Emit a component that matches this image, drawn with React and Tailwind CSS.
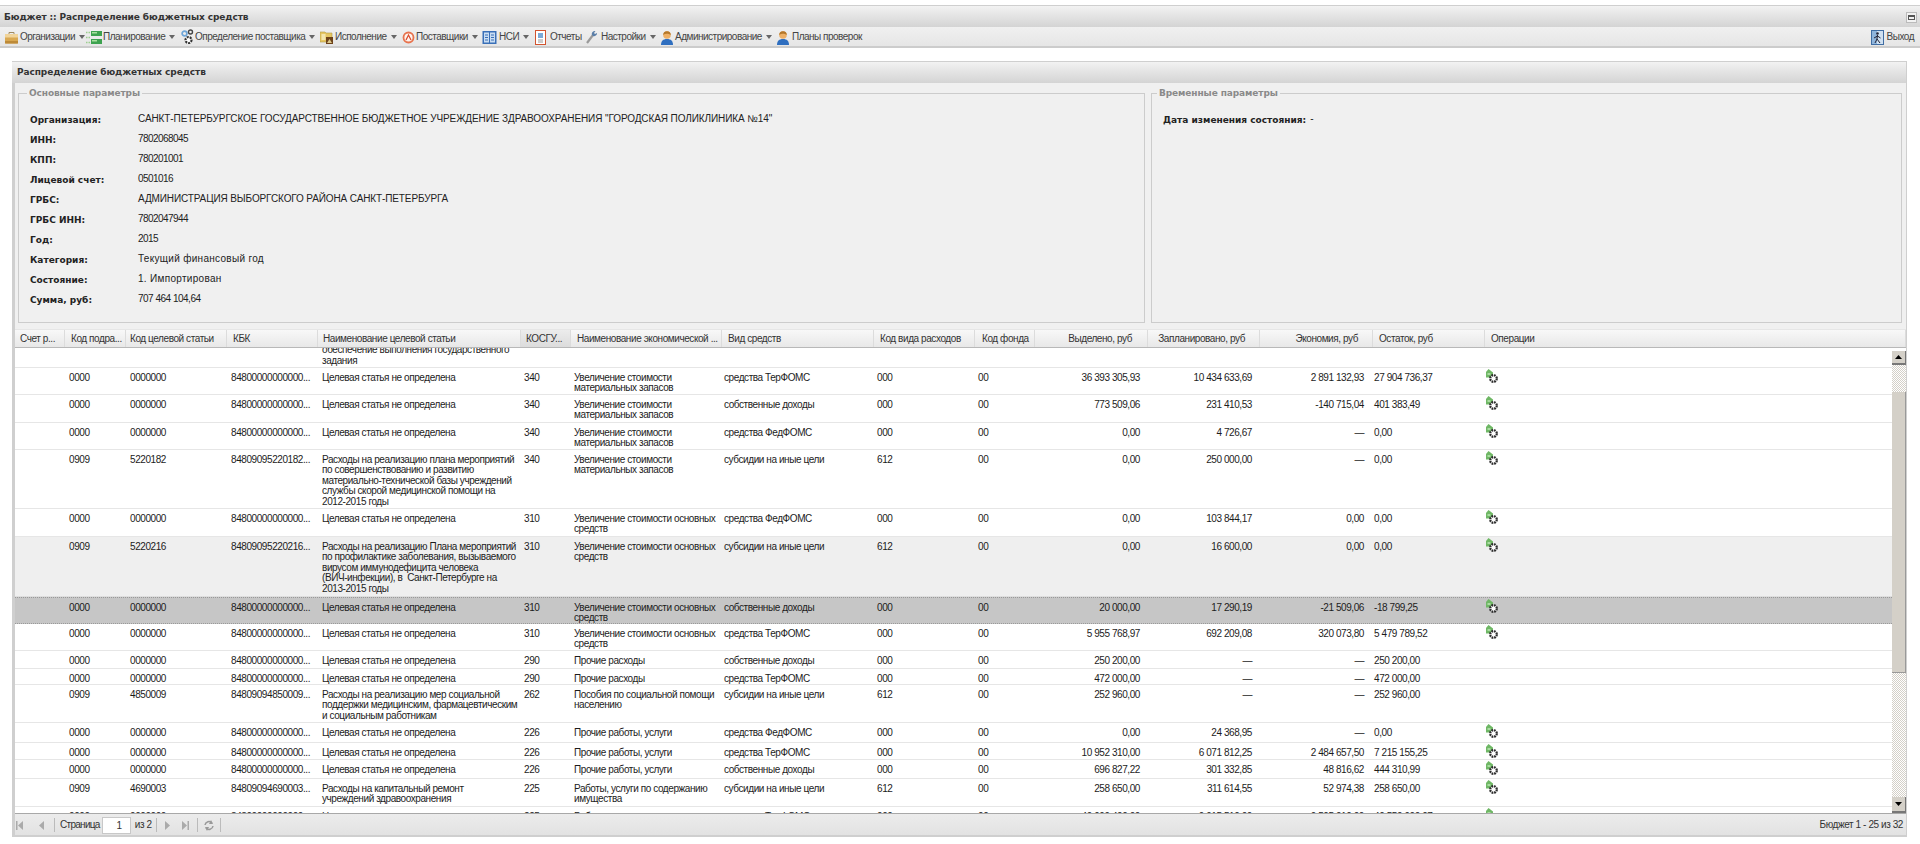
import React from "react";

const COLS = "grid grid-cols-[50px_61px_101px_91px_203px_50px_151px_152px_101px_60px_113px_112px_113px_112px_1fr]";
const UNDEF = "Целевая статья не определена";
const K0 = "84800000000000...";
const UM = "Увеличение стоимости\nматериальных запасов";
const UO = "Увеличение стоимости основных\nсредств";
const SUB = "субсидии на иные цели";
const TER = "средства ТерФОМС";
const FED = "средства ФедФОМС";
const OWN = "собственные доходы";

const rows = [
  { h: "h-[38px] -mt-[18px]", a: "", b: "", k: "", n: "Субсидии на\nобеспечение выполнения государственного\nзадания", c: "", e: "", v: "", r: "", f: "", s: ["", "", "", ""] },
  { h: "h-[27px]", a: "0000", b: "0000000", k: K0, n: UNDEF, c: "340", e: UM, v: TER, r: "000", f: "00", s: ["36 393 305,93", "10 434 633,69", "2 891 132,93", "27 904 736,37"], op: 1 },
  { h: "h-[28px]", a: "0000", b: "0000000", k: K0, n: UNDEF, c: "340", e: UM, v: OWN, r: "000", f: "00", s: ["773 509,06", "231 410,53", "-140 715,04", "401 383,49"], op: 1 },
  { h: "h-[27px]", a: "0000", b: "0000000", k: K0, n: UNDEF, c: "340", e: UM, v: FED, r: "000", f: "00", s: ["0,00", "4 726,67", "—", "0,00"], op: 1 },
  { h: "h-[59px]", a: "0909", b: "5220182", k: "84809095220182...", n: "Расходы на реализацию плана мероприятий\nпо совершенствованию и развитию\nматериально-технической базы учреждений\nслужбы скорой медицинской помощи на\n2012-2015 годы", c: "340", e: UM, v: SUB, r: "612", f: "00", s: ["0,00", "250 000,00", "—", "0,00"], op: 1 },
  { h: "h-[28px]", a: "0000", b: "0000000", k: K0, n: UNDEF, c: "310", e: UO, v: FED, r: "000", f: "00", s: ["0,00", "103 844,17", "0,00", "0,00"], op: 1 },
  { h: "h-[60px]", t: "alt", a: "0909", b: "5220216", k: "84809095220216...", n: "Расходы на реализацию Плана мероприятий\nпо профилактике заболевания, вызываемого\nвирусом иммунодефицита человека\n(ВИЧ-инфекции), в  Санкт-Петербурге на\n2013-2015 годы", c: "310", e: UO, v: SUB, r: "612", f: "00", s: ["0,00", "16 600,00", "0,00", "0,00"], op: 1 },
  { h: "h-[27px]", t: "sel", a: "0000", b: "0000000", k: K0, n: UNDEF, c: "310", e: UO, v: OWN, r: "000", f: "00", s: ["20 000,00", "17 290,19", "-21 509,06", "-18 799,25"], op: 1 },
  { h: "h-[27px]", a: "0000", b: "0000000", k: K0, n: UNDEF, c: "310", e: UO, v: TER, r: "000", f: "00", s: ["5 955 768,97", "692 209,08", "320 073,80", "5 479 789,52"], op: 1 },
  { h: "h-[18px]", a: "0000", b: "0000000", k: K0, n: UNDEF, c: "290", e: "Прочие расходы", v: OWN, r: "000", f: "00", s: ["250 200,00", "—", "—", "250 200,00"] },
  { h: "h-[16px]", a: "0000", b: "0000000", k: K0, n: UNDEF, c: "290", e: "Прочие расходы", v: TER, r: "000", f: "00", s: ["472 000,00", "—", "—", "472 000,00"] },
  { h: "h-[38px]", a: "0909", b: "4850009", k: "84809094850009...", n: "Расходы на реализацию мер социальной\nподдержки медицинским, фармацевтическим\nи социальным работникам", c: "262", e: "Пособия по социальной помощи\nнаселению", v: SUB, r: "612", f: "00", s: ["252 960,00", "—", "—", "252 960,00"] },
  { h: "h-[20px]", a: "0000", b: "0000000", k: K0, n: UNDEF, c: "226", e: "Прочие работы, услуги", v: FED, r: "000", f: "00", s: ["0,00", "24 368,95", "—", "0,00"], op: 1 },
  { h: "h-[17px]", a: "0000", b: "0000000", k: K0, n: UNDEF, c: "226", e: "Прочие работы, услуги", v: TER, r: "000", f: "00", s: ["10 952 310,00", "6 071 812,25", "2 484 657,50", "7 215 155,25"], op: 1 },
  { h: "h-[19px]", a: "0000", b: "0000000", k: K0, n: UNDEF, c: "226", e: "Прочие работы, услуги", v: OWN, r: "000", f: "00", s: ["696 827,22", "301 332,85", "48 816,62", "444 310,99"], op: 1 },
  { h: "h-[28px]", a: "0909", b: "4690003", k: "84809094690003...", n: "Расходы на капитальный ремонт\nучреждений здравоохранения", c: "225", e: "Работы, услуги по содержанию\nимущества", v: SUB, r: "612", f: "00", s: ["258 650,00", "311 614,55", "52 974,38", "258 650,00"], op: 1 },
  { h: "h-[28px]", a: "0000", b: "0000000", k: K0, n: UNDEF, c: "225", e: "Работы, услуги по содержанию\nимущества", v: TER, r: "000", f: "00", s: ["49 999 400,00", "9 915 510,00", "9 505 010,00", "40 550 900,07"], op: 1 },
];

const params = [
  ["Организация:", 'САНКТ-ПЕТЕРБУРГСКОЕ ГОСУДАРСТВЕННОЕ БЮДЖЕТНОЕ УЧРЕЖДЕНИЕ ЗДРАВООХРАНЕНИЯ "ГОРОДСКАЯ ПОЛИКЛИНИКА №14"', "tracking-[-0.1px]"],
  ["ИНН:", "7802068045", "tracking-[-0.55px]"],
  ["КПП:", "780201001", "tracking-[-0.55px]"],
  ["Лицевой счет:", "0501016", "tracking-[-0.55px]"],
  ["ГРБС:", "АДМИНИСТРАЦИЯ ВЫБОРГСКОГО РАЙОНА САНКТ-ПЕТЕРБУРГА", "tracking-[-0.12px]"],
  ["ГРБС ИНН:", "7802047944", "tracking-[-0.55px]"],
  ["Год:", "2015", "tracking-[-0.55px]"],
  ["Категория:", "Текущий финансовый год", "tracking-[0.3px]"],
  ["Состояние:", "1. Импортирован", "tracking-[0.3px]"],
  ["Сумма, руб:", "707 464 104,64", "tracking-[-0.5px]"],
];

const heads = [
  ["Счет р...", "pl-[5px]"], ["Код подра...", "pl-[6px]"], ["Код целевой статьи", "pl-1"], ["КБК", "pl-[6px]"],
  ["Наименование целевой статьи", "pl-[5px]"], ["КОСГУ...", "pl-[5px] bg-linear-to-b from-[#ececec] to-[#dcdcdc]"],
  ["Наименование экономической ...", "pl-[6px]"], ["Вид средств", "pl-[6px]"], ["Код вида расходов", "pl-[6px]"],
  ["Код фонда", "pl-[7px]"], ["Выделено, руб", "justify-end pr-[15px]"], ["Запланировано, руб", "justify-end pr-[14px]"],
  ["Экономия, руб", "justify-end pr-[14px]"], ["Остаток, руб", "pl-[6px]"], ["Операции", "pl-[6px]"],
];

const Caret = () => (
  <svg width="6" height="4" viewBox="0 0 6 4" className="ml-[4px] shrink-0"><path d="M0 0h6L3 4z" fill="#666" /></svg>
);

const IBrief = () => (
  <svg width="13" height="14" viewBox="0 0 13 14"><path d="M4 4V2.500h5V4" fill="none" stroke="#a08a60" /><rect x="0" y="4" width="13" height="9.500" rx="1" fill="#d9a851" /><rect x="0" y="4" width="13" height="3.500" fill="#f1d49a" /><rect x="0" y="11" width="13" height="2.500" fill="#bd8a38" /></svg>
);
const IPlan = () => (
  <svg width="16" height="15" viewBox="0 0 16 15"><path d="M0 2.500h1.500M2.500 2.500H4M0 7.500h1.500M2.500 7.500H4M0 12.500h1.500M2.500 12.500H4" stroke="#9ccf8e" strokeWidth="1.500" /><rect x="5" y="1" width="11" height="5" fill="#3da24f" /><rect x="5" y="9" width="11" height="5" fill="#3da24f" /><rect x="6" y="2" width="5" height="1.500" fill="#a8e0a0" /><rect x="6" y="10" width="5" height="1.500" fill="#a8e0a0" /></svg>
);
const IGears = () => (
  <svg width="13" height="16" viewBox="0 0 13 16"><circle cx="3.500" cy="4.500" r="2.400" fill="none" stroke="#6fa6d8" strokeWidth="1.700" /><circle cx="9.500" cy="3" r="2" fill="none" stroke="#444" strokeWidth="1.400" /><circle cx="7.500" cy="11" r="3" fill="#fff" stroke="#333" strokeWidth="2.200" strokeDasharray="2 1" /></svg>
);
const IExec = () => (
  <svg width="13" height="15" viewBox="0 0 13 15"><path d="M0 2h5l1 1h6v9H0z" fill="#e6c662" stroke="#b49a44" strokeWidth=".6" /><rect x="1.500" y="4" width="4" height="6" fill="#f4e6ae" /><rect x="6" y="7" width="7" height="7" fill="#6e431a" /><path d="M7 13l2.500-4 2.500 4z" fill="#dcc88a" /></svg>
);
const ISupp = () => (
  <svg width="13" height="15" viewBox="0 0 13 15"><circle cx="6.500" cy="7.500" r="5" fill="#fdf3ee" stroke="#e8734e" strokeWidth="1.800" /><path d="M4 10l2.500-5L9 10" fill="none" stroke="#d9482b" strokeWidth="1.200" /></svg>
);
const IBook = () => (
  <svg width="15" height="15" viewBox="0 0 15 15"><rect x="0.500" y="1" width="14" height="13" fill="#3a70b8" /><rect x="2" y="2.500" width="5" height="10" fill="#c9ddf2" /><rect x="8" y="2.500" width="5" height="10" fill="#c9ddf2" /><path d="M3 5h3M3 7.500h3M3 10h3M9 5h3M9 7.500h3M9 10h3" stroke="#3a70b8" /></svg>
);
const IDoc = () => (
  <svg width="11" height="15" viewBox="0 0 11 15"><rect x="0.500" y="0.500" width="10" height="14" fill="#fff" stroke="#d2542f" /><rect x="3" y="3" width="5" height="5" fill="#7aa9d8" /><path d="M3 10h5M3 12h5" stroke="#999" /></svg>
);
const IWrench = () => (
  <svg width="11" height="14" viewBox="0 0 11 14"><path d="M1 13l6-8" stroke="#9a9a9a" strokeWidth="2.200" /><path d="M6 5a3 3 0 0 1 3.500-4L8 3l1 1 2-1a3 3 0 0 1-4 3z" fill="#5b7fa8" /></svg>
);
const IUser = () => (
  <svg width="12" height="15" viewBox="0 0 12 15"><path d="M0 15c0-4 2-6 6-6s6 2 6 6z" fill="#2f6fc0" /><circle cx="6" cy="5" r="3.800" fill="#eeb066" /><path d="M2.200 5a3.800 3.800 0 0 1 7.600 0c-2-1-5-2-7.600 0z" fill="#b5782a" /></svg>
);
const IExit = () => (
  <svg width="13" height="15" viewBox="0 0 13 15"><rect x="0.500" y="0.500" width="12" height="14" fill="#8fb5dc" stroke="#3f6da3" /><rect x="6" y="1" width="6" height="13" fill="#cfe0f1" /><circle cx="6.500" cy="3.500" r="1.300" fill="#223" /><path d="M6.500 5L6 9l-2 4M6 9l3 4M6.500 6l3 2M6.500 6L3 8" stroke="#223" strokeWidth="1" fill="none" /></svg>
);
const IOp = () => (
  <svg width="14" height="15" viewBox="0 0 14 15" className="block"><path d="M3.500 0L8 3.500V8.500H1V3z" fill="#6fb765" /><circle cx="8.500" cy="9.500" r="3.300" fill="#fff" stroke="#2c2c2c" strokeWidth="2.200" strokeDasharray="1.800 .8" /><rect x="2.500" y="4" width="3" height="2" fill="#a9dca0" /></svg>
);

const Item = ({ icon, text, caret, cls = "", gap = "ml-[2px]" }) => (
  <div className={"flex shrink-0 items-center " + cls}>
    {icon}
    <span className={gap}>{text}</span>
    {caret && <Caret />}
  </div>
);

const PagerSep = () => <div className="h-[14px] w-px bg-[#bbb]" />;
const Tri = ({ left, bar, color = "#aaa" }) => (
  <svg width="8" height="9" viewBox="0 0 8 9">
    {left ? <path d="M7 0v9L2 4.500z" fill={color} /> : <path d="M1 0v9l5-4.500z" fill={color} />}
    {bar && <rect x={left ? 0 : 6.500} y="0" width="1.500" height="9" fill={color} />}
  </svg>
);

const Row = ({ r }) => {
  const bg = r.t === "sel"
    ? "bg-[#c6c6c6] border-y border-dotted border-[#999]"
    : r.t === "alt"
    ? "bg-[#efefef] border-b border-[#dedede]"
    : "bg-white border-b border-[#e6e6e6]";
  const cell = "pt-[5px] whitespace-pre overflow-hidden";
  return (
    <div className={COLS + " " + r.h + " " + bg}>
      <div />
      <div className={cell + " pl-1"}>{r.a}</div>
      <div className={cell + " pl-1"}>{r.b}</div>
      <div className={cell + " pl-1"}>{r.k}</div>
      <div className={cell + " pl-1"}>{r.n}</div>
      <div className={cell + " pl-[3px]"}>{r.c}</div>
      <div className={cell + " pl-[3px]"}>{r.e}</div>
      <div className={cell + " pl-[2px]"}>{r.v}</div>
      <div className={cell + " pl-[3px]"}>{r.r}</div>
      <div className={cell + " pl-[3px]"}>{r.f}</div>
      <div className={cell + " text-right pr-2"}>{r.s[0]}</div>
      <div className={cell + " text-right pr-2"}>{r.s[1]}</div>
      <div className={cell + " text-right pr-[9px]"}>{r.s[2]}</div>
      <div className={cell + " pl-px"}>{r.s[3]}</div>
      <div className="pt-[1px]">{r.op && <IOp />}</div>
    </div>
  );
};

export default function App() {
  return (
    <div className="h-[844px] w-[1920px] overflow-hidden bg-white pt-[5px] font-['Liberation_Sans',sans-serif] text-[10px] leading-[10.4px] tracking-[-0.42px] text-[#1c1c1c]">
      <div className="flex h-[22px] items-center justify-between border-t border-[#cfcfcf] bg-linear-to-b from-[#f2f2f2] to-[#d4d4d4] pl-1 pr-[3px] pt-[2px] font-['DejaVu_Sans',sans-serif] text-[9px] font-bold tracking-[-0.1px] text-[#333]">
        <span>Бюджет :: Распределение бюджетных средств</span>
        <div className="flex h-[11px] w-[11px] items-center justify-center border border-[#bbb] bg-[#f2f2f2]">
          <div className="h-[5px] w-[7px] border border-t-2 border-[#555]" />
        </div>
      </div>

      <div className="flex h-[21px] items-center justify-between border-b-2 border-[#cccccc] bg-linear-to-b from-[#f0f0f0] to-[#e6e6e6] pl-[5px] pr-[6px] pt-[1px] tracking-[-0.5px] text-[#444]">
        <div className="flex items-center">
          <Item icon={<IBrief />} text="Организации" caret cls="w-[81px]" />
          <Item icon={<IPlan />} text="Планирование" caret cls="w-[95px]" gap="ml-px" />
          <Item icon={<IGears />} text="Определение поставщика" caret cls="w-[139px]" gap="ml-px" />
          <Item icon={<IExec />} text="Исполнение" caret cls="w-[82px]" />
          <Item icon={<ISupp />} text="Поставщики" caret cls="w-[80px]" gap="ml-px" />
          <Item icon={<IBook />} text="НСИ" caret cls="w-[53px]" />
          <Item icon={<IDoc />} text="Отчеты" cls="w-[51px]" gap="ml-1" />
          <Item icon={<IWrench />} text="Настройки" caret cls="w-[75px]" gap="ml-1" />
          <Item icon={<IUser />} text="Администрирование" caret cls="w-[116px]" />
          <Item icon={<IUser />} text="Планы проверок" gap="ml-[3px]" />
        </div>
        <Item icon={<IExit />} text="Выход" gap="ml-[3px]" />
      </div>

      <div className="ml-3 mt-[13px] flex h-[776px] w-[1895px] flex-col border-b-[2px] border-l-[3px] border-r border-[#cfcfcf] bg-[#f0f0f0]">
        <div className="-ml-[3px] flex h-[22px] shrink-0 items-center border-t border-[#cfcfcf] bg-linear-to-b from-[#f2f2f2] to-[#d4d4d4] pl-[5px] font-['DejaVu_Sans',sans-serif] text-[9px] font-bold tracking-[-0.1px] text-[#333]">
          Распределение бюджетных средств
        </div>

        <div className="flex h-[246px] shrink-0 gap-[6px] pl-[3px] pr-1 pt-[4px] tracking-normal">
          <fieldset className="h-[236px] w-[1127px] border border-[#cccccc] pl-[11px]">
            <legend className="-ml-[3px] px-[2px] font-['DejaVu_Sans',sans-serif] text-[9px] font-bold leading-[12px] tracking-[-0.1px] text-[#8a8a8a]">Основные параметры</legend>
            <div className="flex flex-col pt-[14px]">
              {params.map(([l, v, t]) => (
                <div key={l} className="flex h-5 items-start">
                  <div className="w-[108px] pt-[1px] font-['DejaVu_Sans',sans-serif] text-[9px] font-bold leading-[12px] text-[#222]">{l}</div>
                  <div className={"text-[10px] leading-[12px] text-[#222] " + t}>{v}</div>
                </div>
              ))}
            </div>
          </fieldset>
          <fieldset className="h-[236px] flex-1 border border-[#cccccc] pl-[11px]">
            <legend className="-ml-[6px] px-[2px] font-['DejaVu_Sans',sans-serif] text-[9px] font-bold leading-[12px] tracking-[-0.1px] text-[#8a8a8a]">Временные параметры</legend>
            <div className="flex items-start gap-[4px] pt-[14px]">
              <span className="pt-[1px] font-['DejaVu_Sans',sans-serif] text-[9px] font-bold leading-[12px] text-[#222]">Дата изменения состояния:</span>
              <span className="leading-[12px]">-</span>
            </div>
          </fieldset>
        </div>

        <div className={COLS + " h-[19px] shrink-0 border-t border-b border-t-[#e6e6e6] border-b-[#b8b8b8] bg-linear-to-b from-[#f8f8f8] to-[#e8e8e8] text-[#333]"}>
          {heads.map(([t, c]) => (
            <div key={t} className={"flex items-center whitespace-nowrap border-r border-[#dcdcdc] pt-[2px] " + c}>{t}</div>
          ))}
        </div>

        <div className="flex min-h-0 flex-1 bg-white">
          <div className="min-w-0 flex-1 overflow-hidden">
            {rows.map((r, i) => <Row key={i} r={r} />)}
          </div>
          <div className="flex w-[14px] shrink-0 flex-col pt-[3px]">
            <div className="flex h-[14px] shrink-0 items-center justify-center border-b-2 border-r border-[#777] bg-[#d4d0c8]">
              <svg width="7" height="4" viewBox="0 0 7 4"><path d="M3.500 0L7 4H0z" fill="#000" /></svg>
            </div>
            <div className="h-[27px] shrink-0 bg-[repeating-conic-gradient(#d4d0c8_0_25%,#ffffff_0_50%)] bg-[length:2px_2px]" />
            <div className="h-[281px] shrink-0 border-r border-b border-[#999] bg-[#d4d0c8]" />
            <div className="flex-1 bg-[repeating-conic-gradient(#d4d0c8_0_25%,#ffffff_0_50%)] bg-[length:2px_2px]" />
            <div className="flex h-[16px] shrink-0 items-center justify-center border-b-2 border-r border-[#777] bg-[#d4d0c8]">
              <svg width="7" height="4" viewBox="0 0 7 4"><path d="M0 0h7L3.500 4z" fill="#000" /></svg>
            </div>
          </div>
        </div>

        <div className="flex h-[22px] shrink-0 items-center justify-between border-t border-[#a8a8a8] bg-linear-to-b from-[#ececec] to-[#e2e2e2] pl-px pr-[3px] pt-[1px] text-[#333]">
          <div className="flex items-center">
            <Tri left bar />
            <div className="ml-[13px]"><Tri left /></div>
            <div className="ml-[9px]"><PagerSep /></div>
            <span className="ml-[5px] tracking-[-0.7px]">Страница</span>
            <div className="ml-[2px] h-[17px] w-[29px] border border-[#c8c8c8] bg-white pr-2 text-right leading-[15px]">1</div>
            <span className="ml-[4px]">из 2</span>
            <div className="ml-[4px]"><PagerSep /></div>
            <div className="ml-[7px]"><Tri /></div>
            <div className="ml-[9px]"><Tri bar /></div>
            <div className="ml-[8px]"><PagerSep /></div>
            <svg width="12" height="13" viewBox="0 0 12 13" className="ml-[5px]"><path d="M2 6a4 4 0 0 1 7-2M10 7a4 4 0 0 1-7 2" fill="none" stroke="#999" strokeWidth="1.500" /><path d="M8 1l2 4-4 0zM4 12L2 8l4 0z" fill="#999" /></svg>
            <div className="ml-[5px]"><PagerSep /></div>
          </div>
          <span>Бюджет 1 - 25 из 32</span>
        </div>
      </div>
    </div>
  );
}
